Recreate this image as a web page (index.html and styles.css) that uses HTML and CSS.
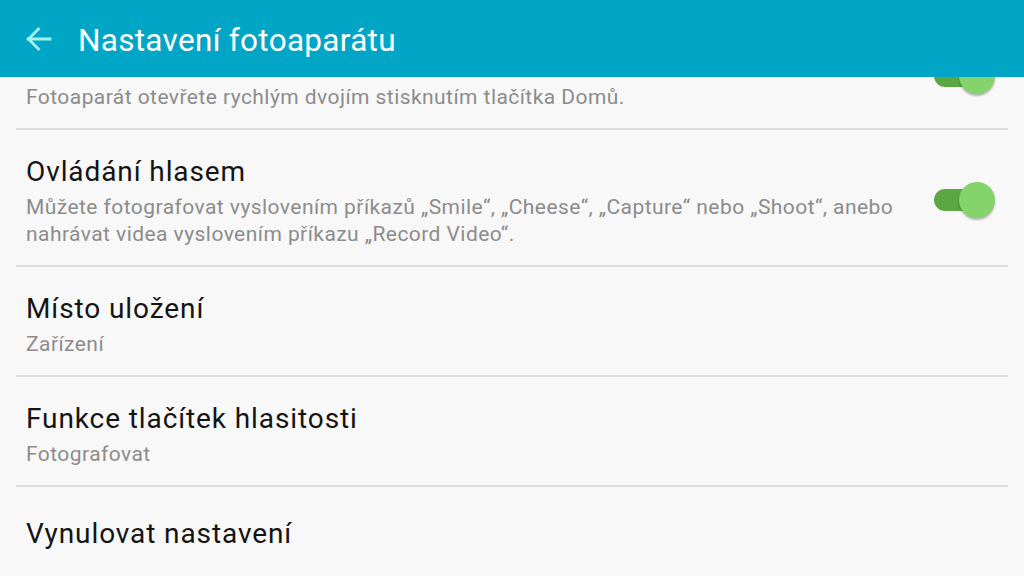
FILE: index.html
```html
<!DOCTYPE html>
<html lang="cs">
<head>
<meta charset="utf-8">
<link rel="stylesheet" href="styles.css">
</head>
<body>
<div class="screen">
  <header class="appbar">
    <svg class="back" width="26" height="24" viewBox="0 0 26 24">
      <path d="M2 12 H24 M12.5 2 L2.5 12 L12.5 22" fill="none" stroke="#a3f1ec" stroke-width="2.8" stroke-linecap="square" stroke-linejoin="miter"/>
    </svg>
    <h1 class="appbar-title">Nastavení fotoaparátu</h1>
  </header>
  <main class="content">
    <ul class="list">
      <li class="row">
        <div class="text">
          <div class="title">Rychlé spuštění</div>
          <div class="sub">Fotoaparát otevřete rychlým dvojím stisknutím tlačítka Domů.</div>
        </div>
        <span class="switch"><span class="knob"></span></span>
      </li>
      <li class="row">
        <div class="text">
          <div class="title">Ovládání hlasem</div>
          <div class="sub">Můžete fotografovat vyslovením příkazů „Smile“, „Cheese“, „Capture“ nebo „Shoot“, anebo nahrávat videa vyslovením příkazu „Record Video“.</div>
        </div>
        <span class="switch"><span class="knob"></span></span>
      </li>
      <li class="row">
        <div class="text">
          <div class="title">Místo uložení</div>
          <div class="sub">Zařízení</div>
        </div>
      </li>
      <li class="row">
        <div class="text">
          <div class="title">Funkce tlačítek hlasitosti</div>
          <div class="sub">Fotografovat</div>
        </div>
      </li>
      <li class="row single">
        <div class="text">
          <div class="title">Vynulovat nastavení</div>
        </div>
      </li>
    </ul>
  </main>
</div>
</body>
</html>
```
FILE: styles.css
```css
* { box-sizing: border-box; }
html, body { margin: 0; padding: 0; }
body {
  width: 1024px;
  height: 576px;
  overflow: hidden;
  background: #f8f8f8;
  font-family: Roboto, "Noto Sans", sans-serif;
}
.screen {
  position: relative;
  width: 1024px;
  height: 576px;
  overflow: hidden;
}
.appbar {
  position: absolute;
  top: 0;
  left: 0;
  right: 0;
  height: 77px;
  background: #01a6c7;
  display: flex;
  align-items: center;
  padding-left: 26px;
  z-index: 2;
}
.back { display: block; margin-top: 0; }
.appbar-title {
  margin: 3px 0 0 26px;
  font-weight: 400;
  font-size: 31.5px;
  letter-spacing: 0.3px;
  color: #ffffff;
}
.content {
  height: 576px;
  overflow: hidden;
}
.list {
  list-style: none;
  margin: 20px 16px 0 16px;
  padding: 0;
}
.row {
  display: flex;
  align-items: center;
  padding: 24px 13px 17px 10px;
  border-bottom: 2px solid #dedede;
}
.row:last-child { border-bottom: none; }
.row.single { padding-top: 29px; }
.text { flex: 1; min-width: 0; padding-right: 28px; }
.title {
  font-size: 28px;
  line-height: 36px;
  letter-spacing: 0.9px;
  color: #141414;
}
.sub {
  margin-top: 4px;
  font-size: 21px;
  line-height: 27px;
  letter-spacing: 0.44px;
  color: #8c8c8c;
}
.switch {
  position: relative;
  flex: none;
  width: 61px;
  height: 36px;
  margin-top: -3px;
}
.switch::before {
  content: "";
  position: absolute;
  left: 0;
  top: 7px;
  width: 44px;
  height: 22px;
  border-radius: 11px;
  background: #5ba842;
}
.knob {
  position: absolute;
  right: 0;
  top: 0;
  width: 36px;
  height: 36px;
  border-radius: 50%;
  background: #84d46b;
  box-shadow: 0 2px 2px rgba(0,0,0,0.28);
}
```
